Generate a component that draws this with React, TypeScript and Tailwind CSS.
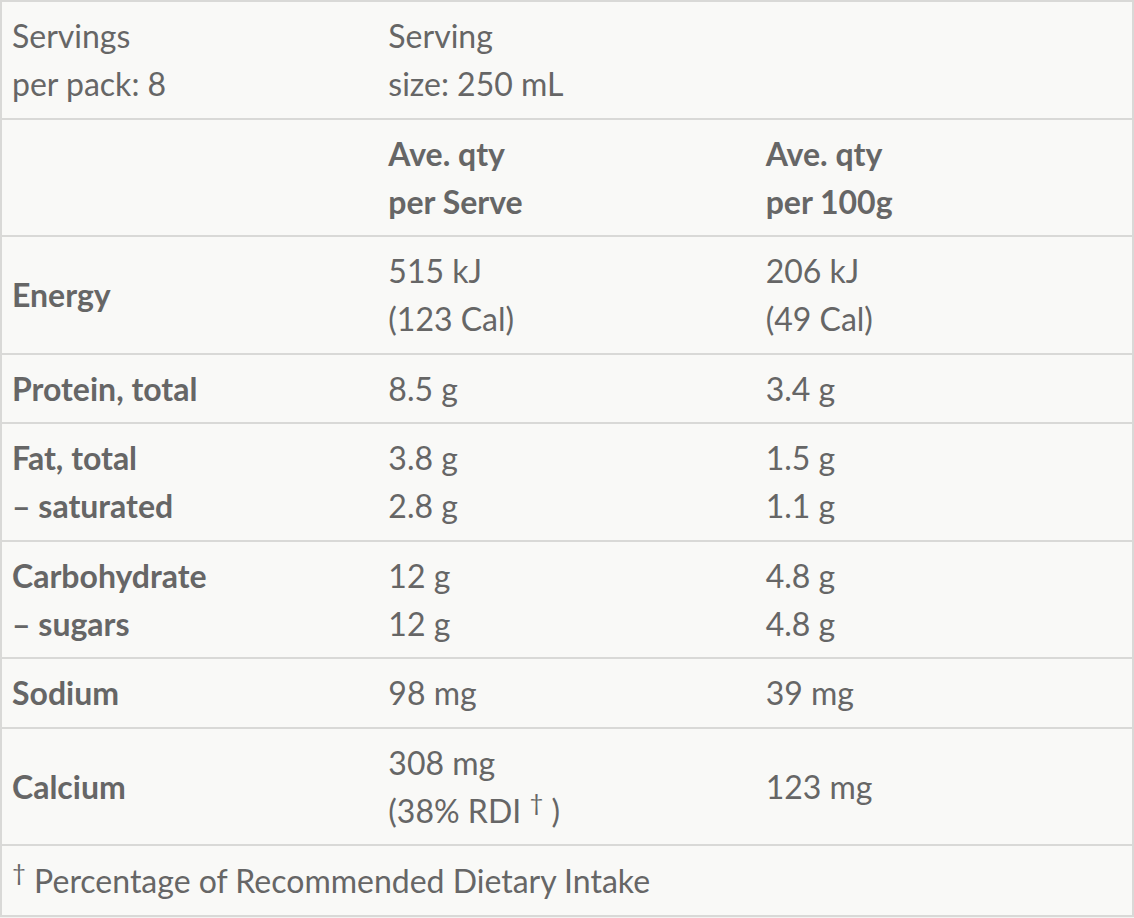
import React from "react";

const cell = "px-[10px] pt-[10px] pb-[9.5px] align-top";
const mid = "px-[10px] pt-[10px] pb-[9.5px] align-middle";
const lbl = "font-bold";

export default function App() {
  return (
    <div
      className="w-[1134px] min-h-[918px] bg-[#f3f3f1] text-[#666666]"
      style={{ fontFamily: "Lato, 'Noto Sans', sans-serif" }}
    >
      <table className="w-full table-fixed border-collapse border-2 border-[#d9d9d7] bg-[#f9f9f7] text-[32px] leading-[48px]">
        <colgroup>
          <col className="w-1/3" />
          <col className="w-1/3" />
          <col className="w-1/3" />
        </colgroup>
        <tbody>
          <tr className="border-t-2 border-[#d9d9d7]">
            <td className={cell}>
              Servings
              <br />
              per pack: 8
            </td>
            <td className={cell}>
              Serving
              <br />
              size: 250 mL
            </td>
            <td className={cell}></td>
          </tr>
          <tr className="border-t-2 border-[#d9d9d7]">
            <td className={cell}></td>
            <td className={`${cell} ${lbl}`}>
              Ave. qty
              <br />
              per Serve
            </td>
            <td className={`${cell} ${lbl}`}>
              Ave. qty
              <br />
              per 100g
            </td>
          </tr>
          <tr className="border-t-2 border-[#d9d9d7]">
            <td className={`${mid} ${lbl}`}>Energy</td>
            <td className={cell}>
              515 kJ
              <br />
              (123 Cal)
            </td>
            <td className={cell}>
              206 kJ
              <br />
              (49 Cal)
            </td>
          </tr>
          <tr className="border-t-2 border-[#d9d9d7]">
            <td className={`${cell} ${lbl}`}>Protein, total</td>
            <td className={cell}>8.5 g</td>
            <td className={cell}>3.4 g</td>
          </tr>
          <tr className="border-t-2 border-[#d9d9d7]">
            <td className={`${cell} ${lbl}`}>
              Fat, total
              <br />– saturated
            </td>
            <td className={cell}>
              3.8 g
              <br />
              2.8 g
            </td>
            <td className={cell}>
              1.5 g
              <br />
              1.1 g
            </td>
          </tr>
          <tr className="border-t-2 border-[#d9d9d7]">
            <td className={`${cell} ${lbl}`}>
              Carbohydrate
              <br />– sugars
            </td>
            <td className={cell}>
              12 g
              <br />
              12 g
            </td>
            <td className={cell}>
              4.8 g
              <br />
              4.8 g
            </td>
          </tr>
          <tr className="border-t-2 border-[#d9d9d7]">
            <td className={`${cell} ${lbl}`}>Sodium</td>
            <td className={cell}>98 mg</td>
            <td className={cell}>39 mg</td>
          </tr>
          <tr className="border-t-2 border-[#d9d9d7]">
            <td className={`${mid} ${lbl}`}>Calcium</td>
            <td className={cell}>
              308 mg
              <br />
              (38% RDI <sup className="text-[24px] leading-none">†</sup> )
            </td>
            <td className={mid}>123 mg</td>
          </tr>
          <tr className="border-t-2 border-[#d9d9d7]">
            <td colSpan={3} className="px-[10px] pt-[11px] pb-[10px] align-top">
              <sup className="text-[24px] leading-none">†</sup> Percentage of Recommended Dietary Intake
            </td>
          </tr>
        </tbody>
      </table>
    </div>
  );
}
